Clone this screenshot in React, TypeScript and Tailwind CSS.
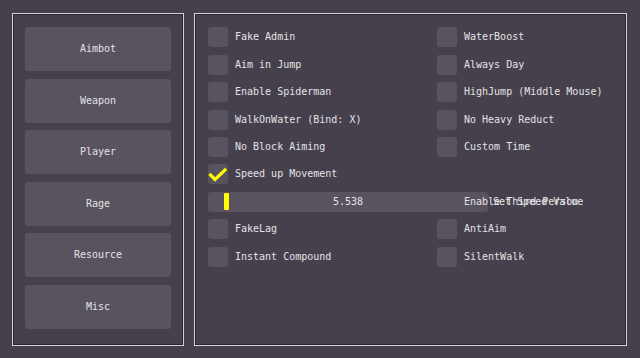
import React from "react";

const tabs = ["Aimbot", "Weapon", "Player", "Rage", "Resource", "Misc"];

type Row = {left?: [string, boolean]; right?: [string, boolean]; slider?: boolean};

const rows: Row[] = [
    {left: ["Fake Admin", false], right: ["WaterBoost", false]},
    {left: ["Aim in Jump", false], right: ["Always Day", false]},
    {left: ["Enable Spiderman", false], right: ["HighJump (Middle Mouse)", false]},
    {left: ["WalkOnWater (Bind: X)", false], right: ["No Heavy Reduct", false]},
    {left: ["No Block Aiming", false], right: ["Custom Time", false]},
    {left: ["Speed up Movement", true]},
    {slider: true, right: ["Enable Third Person", false]},
    {left: ["FakeLag", false], right: ["AntiAim", false]},
    {left: ["Instant Compound", false], right: ["SilentWalk", false]}
];

function Checkbox({label, checked}: {label: string; checked: boolean}) {
    return (
        <div className="flex h-5 items-center gap-[7px]">
            <div className="relative size-5 shrink-0 rounded-[3px] bg-[#58535f]">
                {checked && (
                    <svg width="20" height="20" viewBox="0 0 20 20" className="absolute inset-0" aria-hidden="true">
                        <path d="M2.5 11L7 15.5L17 6" fill="none" stroke="#ffff00" strokeWidth="3.2" strokeLinecap="square" />
                    </svg>
                )}
            </div>
            {/* label sits above the slider that overlays this row, as in the original */}
            <span className="relative z-10 whitespace-nowrap">{label}</span>
        </div>
    );
}

export default function App() {
    return (
        <div
            className="flex h-[358px] w-[640px] gap-[10px] bg-[#45404b] pl-[12px] pt-[13px] text-[10px] leading-none text-[#e4e2e6]"
            style={{fontFamily: '"DejaVu Sans Mono", "Liberation Mono", monospace'}}
        >
            <div className="flex h-[333px] w-[172px] flex-col gap-[7.5px] border border-[#d2cfd6] px-[12px] pt-[13px] shadow-[inset_0_0_0_1px_#2c2831]">
                {tabs.map(t => (
                    <div key={t} className="flex h-[44px] items-center justify-center rounded-[3px] bg-[#58535f]">
                        {t}
                    </div>
                ))}
            </div>
            <div className="flex h-[333px] w-[433px] flex-col gap-[7.45px] border border-[#d2cfd6] pl-[13px] pt-[13.2px] shadow-[inset_0_0_0_1px_#2c2831]">
                {rows.map((r, i) => (
                    <div key={i} className="relative flex h-5">
                        <div className="w-[229px] shrink-0">
                            {r.left && <Checkbox label={r.left[0]} checked={r.left[1]} />}
                        </div>
                        <div>{r.right && <Checkbox label={r.right[0]} checked={r.right[1]} />}</div>
                        {r.slider && (
                            <div className="absolute left-0 top-0 flex h-5 items-center">
                                <div className="relative flex h-5 w-[280px] items-center justify-center rounded-[3px] bg-[#58535f]">
                                    <div className="absolute left-[16px] top-[1.5px] h-[17px] w-[5px] rounded-[1px] bg-[#ffff00]" />
                                    <span>5.538</span>
                                </div>
                                <span className="ml-[5px] whitespace-nowrap">Set Speed Value</span>
                            </div>
                        )}
                    </div>
                ))}
            </div>
        </div>
    );
}
